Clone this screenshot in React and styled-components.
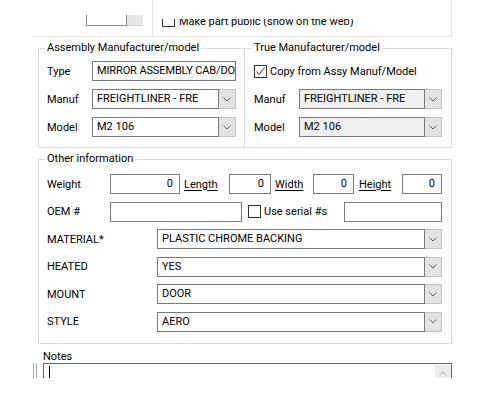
import React from 'react';
import styled, { createGlobalStyle } from 'styled-components';

const GlobalStyle = createGlobalStyle`
  body {
    margin: 0;
    background: #fff;
    font-family: Roboto, "Liberation Sans", sans-serif;
    font-size: 11px;
    color: #000;
  }
`;

const Page = styled.div`
  width: 420px;
  margin-left: 32px;
`;

/* clipped tail of the section above */
const TopStrip = styled.div`
  display: flex;
  height: 37px;
`;

const TopCell = styled.div`
  box-sizing: border-box;
  height: 37px;
  border-bottom: 1px solid #e3e3e3;
  ${(p) => (p.$boxed ? 'flex: 1; border-left: 1px solid #e3e3e3; border-right: 1px solid #e3e3e3;' : 'width: 120px;')}
`;

const ClipRow = styled.div`
  display: flex;
  align-items: flex-end;
  height: ${(p) => p.$h}px;
  margin-top: ${(p) => p.$top}px;
  overflow: hidden;
  padding-left: ${(p) => p.$pad}px;
`;

const SpinBox = styled.div`
  display: flex;
  flex: none;
  width: 57px;
  height: 20px;
`;

const SpinField = styled.div`
  box-sizing: border-box;
  flex: 1;
  border: 1px solid #8a8a8a;
`;

const SpinButtons = styled.div`
  width: 16px;
  background: #e6e6e6;
  border-bottom: 1px solid #d0d0d0;
`;

const InlineCheck = styled.div`
  display: flex;
  align-items: center;
  flex: none;
  height: 14px;
  margin-left: ${(p) => p.$offset || 0}px;
  white-space: nowrap;
`;

const CheckText = styled.span`
  margin-left: ${(p) => p.$gap ?? 4}px;
  margin-top: ${(p) => p.$drop || 0}px;
  white-space: nowrap;
`;

const Groups = styled.div`
  display: flex;
  margin-top: 4px;
  padding-left: 6px;
`;

const Group = styled.fieldset`
  box-sizing: border-box;
  min-width: 0;
  margin: ${(p) => p.$margin || '0'};
  padding: ${(p) => p.$pad || '6px 8px 10px 8px'};
  border: 1px solid #dcdcdc;
  ${(p) => (p.$width ? `width: ${p.$width}px; flex: none;` : 'flex: 1;')}
`;

const Legend = styled.legend`
  margin-left: -2px;
  padding: 0 2px;
  line-height: 14px;
  font-size: 11px;
`;

const Rows = styled.div`
  display: flex;
  flex-direction: column;
  gap: ${(p) => p.$gap}px;
`;

const Row = styled.div`
  display: flex;
  align-items: center;
  height: 20px;
`;

const Label = styled.span`
  flex: none;
  width: ${(p) => p.$w}px;
  white-space: nowrap;
`;

const LinkLabel = styled.span`
  flex: none;
  box-sizing: border-box;
  width: ${(p) => p.$w}px;
  padding-left: ${(p) => p.$pad}px;
  text-decoration: underline;
  text-underline-offset: 2px;
`;

const TextBox = styled.div`
  box-sizing: border-box;
  flex: none;
  width: ${(p) => p.$w}px;
  height: 20px;
  margin-left: ${(p) => (p.$push ? 'auto' : '0')};
  padding: 0 ${(p) => (p.$align === 'right' ? '6px' : '4px')};
  border: 1px solid #7a7a7a;
  background: #fff;
  line-height: 18px;
  letter-spacing: ${(p) => (p.$tight ? '-0.12px' : 'normal')};
  text-align: ${(p) => p.$align || 'left'};
  white-space: nowrap;
  overflow: hidden;
`;

const Combo = styled.div`
  display: flex;
  flex: none;
  width: ${(p) => p.$w}px;
  height: 20px;
`;

const ComboText = styled.div`
  box-sizing: border-box;
  flex: 1;
  min-width: 0;
  padding: 0 4px;
  border: 1px solid #7a7a7a;
  background: ${(p) => (p.$readOnly ? '#f0f0f0' : '#fff')};
  line-height: 18px;
  white-space: nowrap;
  overflow: hidden;
`;

const DropButton = styled.div`
  box-sizing: border-box;
  display: flex;
  align-items: center;
  justify-content: center;
  width: 17px;
  background: #e3e3e3;
  border: 1px solid #c4c4c4;
  border-left: none;
`;

const Box = styled.span`
  box-sizing: border-box;
  display: inline-flex;
  flex: none;
  width: 13px;
  height: 13px;
  border: 1px solid #333;
  background: #fff;
`;

const Notes = styled.div`
  display: grid;
  grid-template-columns: 11px 1fr;
  margin-top: 6px;
`;

const NotesLabel = styled.div`
  grid-column: 2;
  line-height: 13px;
`;

const Stub = styled.div`
  box-sizing: border-box;
  width: 4px;
  height: 15px;
  margin-left: 1px;
  border-left: 1px solid #a8a8a8;
  border-right: 1px solid #a8a8a8;
`;

const NotesClip = styled.div`
  height: 15px;
  overflow: hidden;
`;

const NotesBox = styled.div`
  box-sizing: border-box;
  display: flex;
  height: 60px;
  border: 1px solid #2b7ba8;
`;

const Caret = styled.div`
  flex: 1;
  padding: 2px 0 0 5px;

  &::before {
    content: '';
    display: block;
    width: 1px;
    height: 13px;
    background: #000;
  }
`;

const ScrollBar = styled.div`
  width: 16px;
  padding-top: 1px;
`;

const ScrollUp = styled.div`
  display: flex;
  align-items: center;
  justify-content: center;
  height: 17px;
  background: #ececec;
`;

const Chevron = ({ up, color = '#5f5f5f' }) => (
  <svg width="8" height="5" viewBox="0 0 8 5">
    <polyline
      points={up ? '0.5,4.5 4,1 7.5,4.5' : '0.5,0.5 4,4 7.5,0.5'}
      fill="none"
      stroke={color}
      strokeWidth="1"
    />
  </svg>
);

const CheckBox = ({ checked }) => (
  <Box>
    {checked && (
      <svg width="11" height="11" viewBox="0 0 11 11">
        <polyline points="1.5,5.5 4,8.5 9.5,1.5" fill="none" stroke="#333" strokeWidth="1" />
      </svg>
    )}
  </Box>
);

const ComboBox = ({ w, value, readOnly }) => (
  <Combo $w={w}>
    <ComboText $readOnly={readOnly}>{value}</ComboText>
    <DropButton>
      <Chevron />
    </DropButton>
  </Combo>
);

const attributes = [
  { name: 'MATERIAL*', value: 'PLASTIC CHROME BACKING' },
  { name: 'HEATED', value: 'YES' },
  { name: 'MOUNT', value: 'DOOR' },
  { name: 'STYLE', value: 'AERO' },
];

export default function App() {
  return (
    <>
      <GlobalStyle />
      <Page>
        <TopStrip>
          <TopCell>
            <ClipRow $pad={54} $top={15} $h={11}>
              <SpinBox>
                <SpinField />
                <SpinButtons />
              </SpinBox>
            </ClipRow>
          </TopCell>
          <TopCell $boxed>
            <ClipRow $pad={9} $top={19} $h={8}>
              <InlineCheck>
                <CheckBox />
                <CheckText $drop={3}>Make part public (show on the web)</CheckText>
              </InlineCheck>
            </ClipRow>
          </TopCell>
        </TopStrip>

        <Groups>
          <Group $width={207}>
            <Legend>Assembly Manufacturer/model</Legend>
            <Rows $gap={8}>
              <Row>
                <Label $w={45}>Type</Label>
                <TextBox $w={144} $tight>MIRROR ASSEMBLY CAB/DOOR</TextBox>
              </Row>
              <Row>
                <Label $w={45}>Manuf</Label>
                <ComboBox w={144} value="FREIGHTLINER - FRE" />
              </Row>
              <Row>
                <Label $w={45}>Model</Label>
                <ComboBox w={144} value="M2 106" />
              </Row>
            </Rows>
          </Group>

          <Group $margin="0 0 0 -1px" $pad="6px 9px 10px 9px">
            <Legend>True Manufacturer/model</Legend>
            <Rows $gap={8}>
              <Row>
                <CheckBox checked />
                <CheckText $gap={3}>Copy from Assy Manuf/Model</CheckText>
              </Row>
              <Row>
                <Label $w={45}>Manuf</Label>
                <ComboBox w={143} value="FREIGHTLINER - FRE" readOnly />
              </Row>
              <Row>
                <Label $w={45}>Model</Label>
                <ComboBox w={143} value="M2 106" readOnly />
              </Row>
            </Rows>
          </Group>
        </Groups>

        <Group $width={414} $margin="4px 0 0 6px" $pad="8px 9px 11px 8px">
          <Legend>Other information</Legend>
          <Rows $gap={7.6}>
            <Row>
              <Label $w={63}>Weight</Label>
              <TextBox $w={70} $align="right">0</TextBox>
              <LinkLabel $w={49} $pad={4}>Length</LinkLabel>
              <TextBox $w={42} $align="right">0</TextBox>
              <LinkLabel $w={42} $pad={4}>Width</LinkLabel>
              <TextBox $w={41} $align="right">0</TextBox>
              <LinkLabel $w={48} $pad={5}>Height</LinkLabel>
              <TextBox $w={40} $align="right">0</TextBox>
            </Row>
            <Row>
              <Label $w={63}>OEM #</Label>
              <TextBox $w={132} />
              <InlineCheck $offset={6}>
                <CheckBox />
                <CheckText $gap={3}>Use serial #s</CheckText>
              </InlineCheck>
              <TextBox $w={98} $push />
            </Row>
            {attributes.map((a) => (
              <Row key={a.name}>
                <Label $w={110}>{a.name}</Label>
                <ComboBox w={285} value={a.value} />
              </Row>
            ))}
          </Rows>
        </Group>

        <Notes>
          <NotesLabel>Notes</NotesLabel>
          <Stub />
          <NotesClip>
            <NotesBox>
              <Caret />
              <ScrollBar>
                <ScrollUp>
                  <Chevron up color="#b4b4b4" />
                </ScrollUp>
              </ScrollBar>
            </NotesBox>
          </NotesClip>
        </Notes>
      </Page>
    </>
  );
}
